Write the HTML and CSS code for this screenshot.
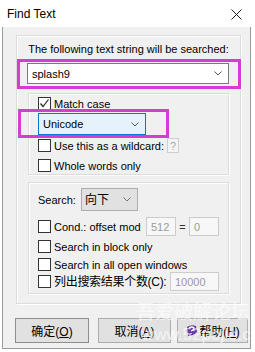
FILE: index.html
```html
<!DOCTYPE html>
<html>
<head>
<meta charset="utf-8">
<link rel="stylesheet" href="styles.css">
</head>
<body>
<div class="titlebar">
  <span class="title">Find Text</span>
  <svg class="close" width="11" height="11" viewBox="0 0 11 11"><path d="M0.5 0.5 L10.5 10.5 M10.5 0.5 L0.5 10.5" stroke="#222" stroke-width="1" fill="none"/></svg>
</div>
<div class="client">
  <div class="group outer">
    <div class="caption">The following text string will be searched:</div>
    <div class="combo main-combo"><span>splash9</span><svg class="chev" width="8" height="5" viewBox="0 0 8 5"><path d="M0.5 0.5 L4 4 L7.5 0.5" stroke="#555" fill="none"/></svg></div>
    <div class="group inner g1">
      <div class="row r-match"><span class="cb checked"><svg width="11" height="11" viewBox="0 0 11 11"><path d="M1.5 5.5 L4 8.5 L9.5 1.5" stroke="#222" stroke-width="1.2" fill="none"/></svg></span><span>Match case</span></div>
      <div class="combo unicode"><span>Unicode</span><svg class="chev" width="8" height="5" viewBox="0 0 8 5"><path d="M0.5 0.5 L4 4 L7.5 0.5" stroke="#555" fill="none"/></svg></div>
      <div class="row r-wild"><span class="cb"></span><span class="wild-label">Use this as a wildcard:</span><span class="qbtn">?</span></div>
      <div class="row r-whole"><span class="cb"></span><span>Whole words only</span></div>
    </div>
    <div class="group inner g2">
      <div class="row r-search"><span class="slabel">Search:</span><div class="combo dir"><span class="cjk">向下</span><svg class="chev" width="8" height="5" viewBox="0 0 8 5"><path d="M0.5 0.5 L4 4 L7.5 0.5" stroke="#777" fill="none"/></svg></div></div>
      <div class="row r-cond"><span class="cb"></span><span class="cond-label">Cond.: offset mod</span><span class="field f512">512</span><span class="eq">=</span><span class="field f0">0</span></div>
      <div class="row r-block"><span class="cb"></span><span>Search in block only</span></div>
      <div class="row r-all"><span class="cb"></span><span>Search in all open windows</span></div>
      <div class="row r-list"><span class="cb"></span><span class="list-label">列出搜索结果个数(C):</span><span class="field f10000">10000</span></div>
    </div>
  </div>
  <div class="buttons">
    <div class="btn b-ok"><span>确定(<u>O</u>)</span></div>
    <div class="btn b-cancel"><span>取消(<u>A</u>)</span></div>
    <div class="btn b-help"><svg class="help-ico" width="13" height="14" viewBox="0 0 13 14"><path d="M2 3 Q6 0 11 2 L12 8 Q8 12 3 12 Z" fill="#6a3aa6"/><path d="M4 4 Q7 2 9 4 Q9 6 6 7 M6 9 L6 10" stroke="#fff" stroke-width="1.3" fill="none"/></svg><span>帮助(<u>H</u>)</span></div>
  </div>
  <div class="mark m1"></div>
  <div class="mark m2"></div>
  <div class="watermark"><div class="wm1">吾爱破解论坛</div><div class="wm2">www.52pojie.cn</div></div>
</div>
</body>
</html>
```
FILE: styles.css
```css
* { box-sizing: border-box; }
html, body { margin: 0; padding: 0; background: #ffffff; }
body {
  width: 255px;
  height: 352px;
  overflow: hidden;
  font-family: "Liberation Sans", "Noto Sans CJK SC", sans-serif;
  font-size: 11px;
  color: #000;
  position: relative;
}
.titlebar {
  height: 27px;
  background: #fff;
  display: flex;
  align-items: center;
  padding-left: 7px;
}
.title { font-size: 12px; line-height: 16px; color: #000; }
.close { margin-left: auto; margin-right: 13px; margin-top: 1px; }
.client {
  display: flow-root;
  margin-left: 2px;
  width: 249px;
  height: 322px;
  background: #f0f0f0;
  border: 1px solid #9a9a9a;
  border-top: none;
  position: relative;
}
.group {
  border: 1px solid #dcdcdc;
  box-shadow: inset 1px 1px 0 #fff, 1px 1px 0 #fff;
}
.outer {
  margin-top: 8px;
  margin-left: 13px;
  width: 225px;
  padding-bottom: 9px;
  display: flex;
  flex-direction: column;
}
.caption {
  margin-top: 5px;
  line-height: 16px;
  text-align: center;
  white-space: nowrap;
}
.combo {
  display: flex;
  align-items: center;
  background: #fff;
  border: 1px solid #7a7a7a;
  padding-left: 4px;
  padding-right: 6px;
}
.combo .chev { margin-left: auto; }
.main-combo {
  margin-top: 6px;
  margin-left: 10px;
  width: 202px;
  height: 21px;
}
.inner {
  margin-left: 11px;
  width: 201px;
  padding-left: 9px;
  display: flex;
  flex-direction: column;
}
.g1 { margin-top: 9px; height: 82px; }
.g2 { margin-top: 7px; height: 112px; }
.row { display: flex; align-items: center; white-space: nowrap; line-height: 14px; }
.cb {
  width: 13px;
  height: 13px;
  border: 1px solid #333;
  background: #fff;
  margin-right: 3px;
  flex: none;
  display: flex;
  align-items: center;
  justify-content: center;
}
.r-match { margin-top: 3px; height: 13px; }
.unicode {
  margin-top: 3px;
  width: 108px;
  height: 22px;
  background: #e5f1fb;
  border-color: #0078d7;
}
.r-wild { margin-top: 3px; height: 15px; }
.wild-label { width: 113px; }
.qbtn {
  width: 12px;
  height: 15px;
  border: 1px solid #cfcfcf;
  color: #a8a8a8;
  background: #f4f4f4;
  display: flex;
  align-items: center;
  justify-content: center;
  font-size: 11px;
}
.r-whole { margin-top: 6px; height: 13px; }
.r-search { margin-top: 5px; height: 23px; }
.slabel { width: 43px; }
.dir {
  width: 57px;
  height: 23px;
  background: #e1e1e1;
  border-color: #adadad;
  padding-left: 3px;
  font-size: 12px;
}
.r-cond { margin-top: 6px; height: 19px; }
.cond-label { width: 92px; }
.field {
  height: 19px;
  border: 1px solid #cccccc;
  background: #f7f7f7;
  color: #9b9b9b;
  padding-left: 4px;
  display: flex;
  align-items: center;
  flex: none;
}
.f512 { width: 30px; }
.eq { width: 13px; text-align: center; color: #333; }
.f0 { width: 30px; }
.r-block { margin-top: 4px; height: 13px; }
.r-all { margin-top: 5px; height: 13px; }
.r-list { margin-top: 1px; height: 19px; }
.list-label { width: 116px; overflow: hidden; font-size: 12px; letter-spacing: -0.3px; }
.f10000 { width: 49px; }
.buttons {
  margin-top: 14px;
  display: flex;
  height: 25px;
}
.btn {
  height: 25px;
  background: #e1e1e1;
  border: 1px solid #adadad;
  display: flex;
  align-items: center;
  justify-content: center;
  white-space: nowrap;
  font-size: 12px;
}
.btn u { text-decoration: underline; }
.b-ok { margin-left: 12px; width: 74px; border-color: #8e8e8e; }
.b-cancel { margin-left: 9px; width: 73px; }
.b-help { margin-left: 6px; width: 71px; }
.help-ico { margin-right: 1px; }
.mark {
  position: absolute;
  border: 3px solid #d63bd3;
}
.m1 { left: 14px; top: 32px; width: 224px; height: 30px; }
.m2 { left: 15px; top: 82px; width: 151px; height: 29px; }
.watermark {
  position: absolute;
  left: 133px;
  top: 272px;
  color: rgba(255, 255, 255, 0.65);
  pointer-events: none;
}
.wm1 { font-family: "Noto Sans CJK SC", sans-serif; font-size: 19px; line-height: 24px; }
.wm2 { font-family: "Liberation Sans", sans-serif; font-size: 17px; line-height: 20px; margin-left: 6px; margin-top: 2px; }
```
